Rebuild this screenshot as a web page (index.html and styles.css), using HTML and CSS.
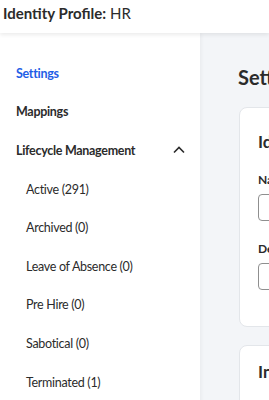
FILE: index.html
```html
<!DOCTYPE html>
<html lang="en">
<head>
    <meta charset="UTF-8">
    <meta name="viewport" content="width=device-width, initial-scale=1.0">
    <title>Identity Profile: HR</title>
    <link rel="stylesheet" href="styles.css">
</head>
<body>
    <header class="top-bar">
        <h1 class="page-title"><strong>Identity Profile:</strong> HR</h1>
    </header>

    <div class="layout">
        <nav class="sidebar">
            <a class="nav-item active" href="#">Settings</a>
            <a class="nav-item" href="#">Mappings</a>
            <div class="nav-item nav-group">
                <span>Lifecycle Management</span>
                <svg class="chevron" width="14" height="14" viewBox="0 0 14 14">
                    <path d="M2 9.5 L7 4.5 L12 9.5" fill="none" stroke="#2b2b2b" stroke-width="1.6"/>
                </svg>
            </div>
            <a class="nav-item sub" href="#">Active (291)</a>
            <a class="nav-item sub" href="#">Archived (0)</a>
            <a class="nav-item sub" href="#">Leave of Absence (0)</a>
            <a class="nav-item sub" href="#">Pre Hire (0)</a>
            <a class="nav-item sub" href="#">Sabotical (0)</a>
            <a class="nav-item sub" href="#">Terminated (1)</a>
        </nav>

        <main class="content">
            <h2 class="section-title">Settings</h2>

            <div class="card">
                <h3 class="card-title">Identity Profile</h3>
                <label class="field-label">Name</label>
                <input class="field-input" type="text">
                <label class="field-label">Description</label>
                <input class="field-input" type="text">
            </div>

            <div class="card card-short">
                <h3 class="card-title">Information</h3>
            </div>
        </main>
    </div>
</body>
</html>
```

FILE: styles.css
```css
body {
    margin: 0;
    height: 100vh;
    display: flex;
    flex-direction: column;
    font-family: Lato, "Liberation Sans", sans-serif;
    color: #2b2b2b;
    background-color: #f3f5f8;
    overflow: hidden;
}
.top-bar {
    height: 33px;
    flex-shrink: 0;
    background-color: white;
    box-shadow: 0 2px 4px rgba(0, 0, 0, 0.08);
    position: relative;
    z-index: 2;
}
.page-title {
    margin: 0;
    padding: 3px 0 0 3px;
    font-size: 15px;
    font-weight: normal;
    line-height: 20px;
}
.layout {
    flex: 1;
    display: flex;
}
.sidebar {
    width: 200px;
    flex-shrink: 0;
    background-color: white;
    padding-top: 21px;
    box-shadow: 1px 0 4px rgba(0, 0, 0, 0.05);
    z-index: 1;
}
.nav-item {
    display: flex;
    align-items: center;
    justify-content: space-between;
    height: 38.6px;
    padding: 0 14px 0 16px;
    font-size: 12.5px;
    letter-spacing: -0.3px;
    font-weight: bold;
    color: #2b2b2b;
    text-decoration: none;
}
.nav-item.active {
    color: #1f5ee6;
}
.nav-item.sub {
    padding-left: 26px;
    font-weight: normal;
}
.chevron {
    display: block;
}
.content {
    flex: 1;
    padding: 0 0 0 38px;
    min-width: 0;
}
.section-title {
    margin: 0;
    padding-top: 32px;
    font-size: 20px;
    line-height: 24px;
    white-space: nowrap;
}
.card {
    margin: 18px 0 18px 1px;
    padding: 24px 18px 36px;
    background-color: white;
    border: 1px solid #e3e6ea;
    border-radius: 8px;
    display: flex;
    flex-direction: column;
    width: 300px;
}
.card-short {
    margin-top: 0;
    padding-top: 16px;
}
.card-title {
    margin: 0 0 20px;
    font-size: 17px;
    line-height: 20px;
    white-space: nowrap;
}
.field-label {
    font-size: 12px;
    font-weight: bold;
    line-height: 16px;
    margin-bottom: 6px;
}
.field-input {
    height: 27px;
    box-sizing: border-box;
    border: 1px solid #8f8f8f;
    border-radius: 4px;
    margin: 0 0 20px;
    padding: 0 8px;
}
.field-input:last-child {
    margin-bottom: 0;
}
```
